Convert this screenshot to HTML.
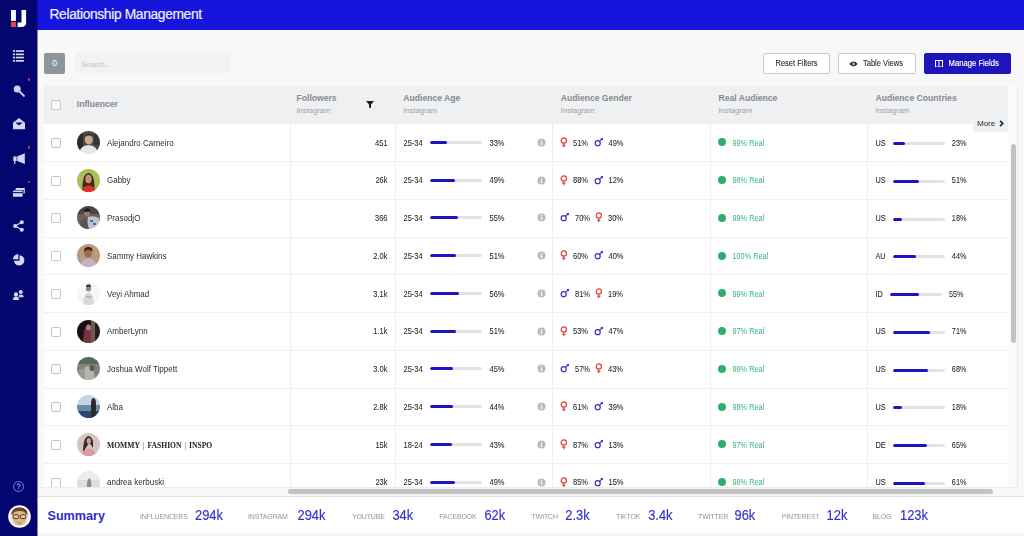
<!DOCTYPE html>
<html><head><meta charset="utf-8"><style>
*{box-sizing:border-box}
html,body{margin:0;padding:0}
body{width:1024px;height:536px;overflow:hidden;position:relative;background:#f8f8f9;font-family:"Liberation Sans",sans-serif;color:#333}
.abs{position:absolute}
#side{position:absolute;left:0;top:0;width:37px;height:536px;background:#04066f}
#head{position:absolute;left:37px;top:0;width:987px;height:29.5px;background:#1515dc;color:#eef0ff;font-size:13.8px;letter-spacing:-0.35px;line-height:29px;padding-left:12.5px;-webkit-text-stroke:0.2px #eef0ff}
.t{position:absolute;font-size:7.5px;line-height:12px;white-space:nowrap;color:#262626;-webkit-text-stroke:0.06px #262626;transform:scaleY(1.15);transform-origin:0 8.6px}
#tbl{position:absolute;left:44px;top:86px;width:964px;height:401px;background:#fff;overflow:hidden}
#thead{position:absolute;left:0;top:0;width:964px;height:38px;background:#eff0f2}
.row{position:absolute;left:44px;width:964px;height:1px;background:#f1f1f1}
.vl{position:absolute;top:86px;width:1px;height:401px;background:#efefef}
.hl{position:absolute;font-size:8.6px;font-weight:bold;color:#868a90;white-space:nowrap;line-height:12px}
.hs{position:absolute;font-size:7.6px;color:#9da0a5;white-space:nowrap;line-height:10px}
.cb{position:absolute;left:51.3px;width:10px;height:10px;border:1px solid #c4c4c4;border-radius:2px;background:#fff}
.av{position:absolute;left:77px;width:23px;height:23px;line-height:0}
.nm{left:107px;font-size:8px;color:#2e2e2e;-webkit-text-stroke:0 transparent}
.pipe{font-weight:normal;color:#555;margin:0 3px 0 3px;-webkit-text-stroke:0}
.serif{font-family:"Liberation Serif",serif;font-weight:bold;font-size:7.6px;color:#222}
.fol{right:636.5px;text-align:right}
.bar{position:absolute;height:3px;background:#e2e2e2;border-radius:2px;overflow:hidden}
.bar i{display:block;height:3px;background:#1d13c0;border-radius:2px}
.ic{position:absolute;line-height:0}
.dot{position:absolute;left:718px;width:8px;height:8px;border-radius:50%;background:#2fae6e}
.real{left:732.5px;color:#30b57a;font-size:7.3px;-webkit-text-stroke:0 transparent}
.cc{position:absolute;left:875.5px;font-size:7.3px;line-height:12px;white-space:nowrap;display:flex;align-items:center;color:#262626;-webkit-text-stroke:0.06px #262626}
.cc span:not(.bar2){display:inline-block;transform:scaleY(1.15);transform-origin:0 8.6px}
.cc .lab{min-width:0}
.bar2{display:inline-block;width:52px;height:3px;background:#e2e2e2;border-radius:2px;margin:0 7px 0 7.2px;overflow:hidden}
.bar2 i{display:block;height:3px;background:#1d13c0;border-radius:2px}
.btn{position:absolute;top:53px;height:21px;border:1px solid #c9c9c9;border-radius:2px;background:#fff;font-size:7.5px;line-height:19px;text-align:center;color:#333;white-space:nowrap}
.sl{position:absolute;top:511px;font-size:7px;line-height:12px;color:#909398;white-space:nowrap;letter-spacing:-0.15px;transform:scaleY(1.12);transform-origin:0 8.5px}
.sv{position:absolute;top:507px;font-size:12.9px;line-height:18px;color:#3531c9;white-space:nowrap;transform:scaleY(1.08);transform-origin:0 14px;-webkit-text-stroke:0.15px #3531c9}
.sico{position:absolute;line-height:0}
</style></head><body>
<div id="side"></div>
<div id="head">Relationship Management</div>

<div class="abs" style="left:44px;top:53px;width:21px;height:21px;background:#8c959d;border-radius:2px;color:#fff;font-size:8.5px;line-height:21px;text-align:center">0</div>
<div class="abs" style="left:75px;top:53px;width:155px;height:20px;background:#f1f2f3;border-radius:2px;color:#c3c6ca;font-size:7.5px;line-height:20px;padding-top:1.5px;padding-left:6px">Search...</div>

<div class="btn" style="left:763px;width:67px"></div>
<div class="t" style="left:775.5px;top:58px;font-size:7.5px">Reset Filters</div>
<div class="btn" style="left:838px;width:77.5px">&nbsp;</div>
<div class="btn" style="left:923.5px;width:87.5px;background:#1d14b9;border-color:#1d14b9;color:#fff">&nbsp;</div>

<div id="tbl"><div id="thead"></div></div>

<div class="vl" style="left:290px"></div>
<div class="vl" style="left:395px"></div>
<div class="vl" style="left:552px"></div>
<div class="vl" style="left:710px"></div>
<div class="vl" style="left:867px"></div>
<div class="cb" style="top:99.7px;background:#fbfbfb"></div>
<div class="hl" style="left:76.8px;top:97.5px">Influencer</div>
<div class="hl" style="left:296.5px;top:92px">Followers</div>
<div class="hs" style="left:296.5px;top:106px">Instagram</div>
<div class="ic" style="left:365.5px;top:100.5px"><svg width="8" height="7.5" viewBox="0 0 8 7.5"><path d="M0 0H8L5 3.6V7.5L3 6.3V3.6Z" fill="#1b1b1b"/></svg></div>
<div class="hl" style="left:403.3px;top:92px">Audience Age</div>
<div class="hs" style="left:403.3px;top:106px">Instagram</div>
<div class="hl" style="left:560.8px;top:92px">Audience Gender</div>
<div class="hs" style="left:560.8px;top:106px">Instagram</div>
<div class="hl" style="left:718.5px;top:92px">Real Audience</div>
<div class="hs" style="left:718.5px;top:106px">Instagram</div>
<div class="hl" style="left:875.5px;top:92px">Audience Countries</div>
<div class="hs" style="left:875.5px;top:106px">Instagram</div>
<div class="row" style="top:161.00px"></div>
<div class="cb" style="top:137.90px"></div>
<div class="av" style="top:130.90px"><svg width="23" height="23" viewBox="0 0 23 23"><defs><clipPath id="c0"><circle cx="11.5" cy="11.5" r="11.5"/></clipPath><filter id="f0" x="-10%" y="-10%" width="120%" height="120%"><feGaussianBlur stdDeviation="0.45"/></filter></defs><g clip-path="url(#c0)"><g filter="url(#f0)"><rect width="23" height="23" fill="#4a4848"/><rect x="0" y="0" width="6" height="23" fill="#2a2a2a"/><rect x="17" y="0" width="6" height="14" fill="#3a3632"/><ellipse cx="11.8" cy="8.5" rx="4" ry="5" fill="#c8a890"/><path d="M7.8 6Q8 2.8 11.8 2.8Q15.6 2.8 15.8 6Q14 4.5 11.8 4.6Q9.6 4.5 7.8 6Z" fill="#3a2a22"/><path d="M2 23Q3 14.5 11.5 14Q20 14.5 21 23Z" fill="#e6e6ec"/></g></g></svg></div>
<div class="t nm" style="top:137.60px">Alejandro Carneiro</div>
<div class="t fol" style="top:137.60px">451</div>
<div class="t" style="left:403.5px;top:137.60px">25-34</div>
<div class="bar" style="left:430px;top:140.90px;width:51.5px"><i style="width:17.0px"></i></div>
<div class="t" style="left:489.5px;top:137.60px">33%</div>
<div class="ic" style="left:537.2px;top:137.80px"><svg width="9" height="9" viewBox="0 0 9 9"><circle cx="4.5" cy="4.5" r="4" fill="#b8bbbf"/><rect x="3.9" y="3.8" width="1.2" height="3.2" fill="#fff"/><rect x="3.9" y="2" width="1.2" height="1.2" fill="#fff"/></svg></div>
<div class="ic" style="left:560px;top:136.90px"><svg width="8" height="11" viewBox="0 0 8 11"><circle cx="3.8" cy="3.4" r="2.6" fill="none" stroke="#e23b35" stroke-width="1.15"/><path d="M3.8 6V10.2M2.1 8.2H5.5" stroke="#e23b35" stroke-width="1.15"/></svg></div>
<div class="t" style="left:573px;top:137.60px">51%</div>
<div class="ic" style="left:593.5px;top:136.90px"><svg width="10" height="10" viewBox="0 0 10 10"><circle cx="3.7" cy="6.2" r="2.5" fill="none" stroke="#3b32c4" stroke-width="1.25"/><path d="M5.5 4.4L7.9 2" stroke="#3b32c4" stroke-width="1.1"/><path d="M6.3 0.9H9V3.6Z" fill="#3b32c4"/></svg></div>
<div class="t" style="left:608.5px;top:137.60px">49%</div>
<div class="dot" style="top:138.40px"></div>
<div class="t real" style="top:137.60px">99% Real</div>
<div class="cc" style="top:137.60px"><span class="lab">US</span><span class="bar2"><i style="width:23%"></i></span><span>23%</span></div><div class="row" style="top:198.75px"></div>
<div class="cb" style="top:175.65px"></div>
<div class="av" style="top:168.65px"><svg width="23" height="23" viewBox="0 0 23 23"><defs><clipPath id="c1"><circle cx="11.5" cy="11.5" r="11.5"/></clipPath><filter id="f1" x="-10%" y="-10%" width="120%" height="120%"><feGaussianBlur stdDeviation="0.45"/></filter></defs><g clip-path="url(#c1)"><g filter="url(#f1)"><rect width="23" height="23" fill="#a9bf58"/><path d="M5.5 21Q5 5 11.5 4Q18 5 17.5 21Z" fill="#4a2620"/><ellipse cx="11.5" cy="10" rx="3.2" ry="4.3" fill="#c99078"/><path d="M4 23Q5 17 11.5 16.5Q18 17 19 23Z" fill="#d8302c"/></g></g></svg></div>
<div class="t nm" style="top:175.35px">Gabby</div>
<div class="t fol" style="top:175.35px">26k</div>
<div class="t" style="left:403.5px;top:175.35px">25-34</div>
<div class="bar" style="left:430px;top:178.65px;width:51.5px"><i style="width:25.2px"></i></div>
<div class="t" style="left:489.5px;top:175.35px">49%</div>
<div class="ic" style="left:537.2px;top:175.55px"><svg width="9" height="9" viewBox="0 0 9 9"><circle cx="4.5" cy="4.5" r="4" fill="#b8bbbf"/><rect x="3.9" y="3.8" width="1.2" height="3.2" fill="#fff"/><rect x="3.9" y="2" width="1.2" height="1.2" fill="#fff"/></svg></div>
<div class="ic" style="left:560px;top:174.65px"><svg width="8" height="11" viewBox="0 0 8 11"><circle cx="3.8" cy="3.4" r="2.6" fill="none" stroke="#e23b35" stroke-width="1.15"/><path d="M3.8 6V10.2M2.1 8.2H5.5" stroke="#e23b35" stroke-width="1.15"/></svg></div>
<div class="t" style="left:573px;top:175.35px">88%</div>
<div class="ic" style="left:593.5px;top:174.65px"><svg width="10" height="10" viewBox="0 0 10 10"><circle cx="3.7" cy="6.2" r="2.5" fill="none" stroke="#3b32c4" stroke-width="1.25"/><path d="M5.5 4.4L7.9 2" stroke="#3b32c4" stroke-width="1.1"/><path d="M6.3 0.9H9V3.6Z" fill="#3b32c4"/></svg></div>
<div class="t" style="left:608.5px;top:175.35px">12%</div>
<div class="dot" style="top:176.15px"></div>
<div class="t real" style="top:175.35px">98% Real</div>
<div class="cc" style="top:175.35px"><span class="lab">US</span><span class="bar2"><i style="width:51%"></i></span><span>51%</span></div><div class="row" style="top:236.50px"></div>
<div class="cb" style="top:213.40px"></div>
<div class="av" style="top:206.40px"><svg width="23" height="23" viewBox="0 0 23 23"><defs><clipPath id="c2"><circle cx="11.5" cy="11.5" r="11.5"/></clipPath><filter id="f2" x="-10%" y="-10%" width="120%" height="120%"><feGaussianBlur stdDeviation="0.45"/></filter></defs><g clip-path="url(#c2)"><g filter="url(#f2)"><rect width="23" height="23" fill="#6a6058"/><rect x="0" y="0" width="23" height="8" fill="#4a4446"/><path d="M10 23L11 11Q16 9 22 12V23Z" fill="#b8c6d6"/><path d="M13 14h3v2h-3zM16 17h3v2h-3z" fill="#5a6a88"/><ellipse cx="10" cy="7" rx="3" ry="3.4" fill="#a07860"/><path d="M6.8 6Q7 2.5 10.5 2.5Q13.5 2.7 13.5 5.5Z" fill="#1e1a1a"/><path d="M2 23Q3 12 9 12L12 23Z" fill="#5a5252"/></g></g></svg></div>
<div class="t nm" style="top:213.10px">PrasodjO</div>
<div class="t fol" style="top:213.10px">366</div>
<div class="t" style="left:403.5px;top:213.10px">25-34</div>
<div class="bar" style="left:430px;top:216.40px;width:51.5px"><i style="width:28.3px"></i></div>
<div class="t" style="left:489.5px;top:213.10px">55%</div>
<div class="ic" style="left:537.2px;top:213.30px"><svg width="9" height="9" viewBox="0 0 9 9"><circle cx="4.5" cy="4.5" r="4" fill="#b8bbbf"/><rect x="3.9" y="3.8" width="1.2" height="3.2" fill="#fff"/><rect x="3.9" y="2" width="1.2" height="1.2" fill="#fff"/></svg></div>
<div class="ic" style="left:560px;top:212.40px"><svg width="10" height="10" viewBox="0 0 10 10"><circle cx="3.7" cy="6.2" r="2.5" fill="none" stroke="#3b32c4" stroke-width="1.25"/><path d="M5.5 4.4L7.9 2" stroke="#3b32c4" stroke-width="1.1"/><path d="M6.3 0.9H9V3.6Z" fill="#3b32c4"/></svg></div>
<div class="t" style="left:575px;top:213.10px">70%</div>
<div class="ic" style="left:594.5px;top:212.40px"><svg width="8" height="11" viewBox="0 0 8 11"><circle cx="3.8" cy="3.4" r="2.6" fill="none" stroke="#e23b35" stroke-width="1.15"/><path d="M3.8 6V10.2M2.1 8.2H5.5" stroke="#e23b35" stroke-width="1.15"/></svg></div>
<div class="t" style="left:608px;top:213.10px">30%</div>
<div class="dot" style="top:213.90px"></div>
<div class="t real" style="top:213.10px">99% Real</div>
<div class="cc" style="top:213.10px"><span class="lab">US</span><span class="bar2"><i style="width:18%"></i></span><span>18%</span></div><div class="row" style="top:274.25px"></div>
<div class="cb" style="top:251.15px"></div>
<div class="av" style="top:244.15px"><svg width="23" height="23" viewBox="0 0 23 23"><defs><clipPath id="c3"><circle cx="11.5" cy="11.5" r="11.5"/></clipPath><filter id="f3" x="-10%" y="-10%" width="120%" height="120%"><feGaussianBlur stdDeviation="0.45"/></filter></defs><g clip-path="url(#c3)"><g filter="url(#f3)"><rect width="23" height="23" fill="#b89a80"/><ellipse cx="11" cy="9" rx="3.8" ry="4.6" fill="#9a6a4c"/><path d="M7 8Q6.5 3 11.5 3Q16 3 15.5 8Q13.5 5.5 11 5.8Q9 5.8 7 8Z" fill="#3a2418"/><path d="M3 23Q4 14.5 11.5 14.5Q19 14.5 20 23Z" fill="#c8b0c4"/></g></g></svg></div>
<div class="t nm" style="top:250.85px">Sammy Hawkins</div>
<div class="t fol" style="top:250.85px">2.0k</div>
<div class="t" style="left:403.5px;top:250.85px">25-34</div>
<div class="bar" style="left:430px;top:254.15px;width:51.5px"><i style="width:26.3px"></i></div>
<div class="t" style="left:489.5px;top:250.85px">51%</div>
<div class="ic" style="left:537.2px;top:251.05px"><svg width="9" height="9" viewBox="0 0 9 9"><circle cx="4.5" cy="4.5" r="4" fill="#b8bbbf"/><rect x="3.9" y="3.8" width="1.2" height="3.2" fill="#fff"/><rect x="3.9" y="2" width="1.2" height="1.2" fill="#fff"/></svg></div>
<div class="ic" style="left:560px;top:250.15px"><svg width="8" height="11" viewBox="0 0 8 11"><circle cx="3.8" cy="3.4" r="2.6" fill="none" stroke="#e23b35" stroke-width="1.15"/><path d="M3.8 6V10.2M2.1 8.2H5.5" stroke="#e23b35" stroke-width="1.15"/></svg></div>
<div class="t" style="left:573px;top:250.85px">60%</div>
<div class="ic" style="left:593.5px;top:250.15px"><svg width="10" height="10" viewBox="0 0 10 10"><circle cx="3.7" cy="6.2" r="2.5" fill="none" stroke="#3b32c4" stroke-width="1.25"/><path d="M5.5 4.4L7.9 2" stroke="#3b32c4" stroke-width="1.1"/><path d="M6.3 0.9H9V3.6Z" fill="#3b32c4"/></svg></div>
<div class="t" style="left:608.5px;top:250.85px">40%</div>
<div class="dot" style="top:251.65px"></div>
<div class="t real" style="top:250.85px">100% Real</div>
<div class="cc" style="top:250.85px"><span class="lab">AU</span><span class="bar2"><i style="width:44%"></i></span><span>44%</span></div><div class="row" style="top:312.00px"></div>
<div class="cb" style="top:288.90px"></div>
<div class="av" style="top:281.90px"><svg width="23" height="23" viewBox="0 0 23 23"><defs><clipPath id="c4"><circle cx="11.5" cy="11.5" r="11.5"/></clipPath><filter id="f4" x="-10%" y="-10%" width="120%" height="120%"><feGaussianBlur stdDeviation="0.45"/></filter></defs><g clip-path="url(#c4)"><g filter="url(#f4)"><rect width="23" height="23" fill="#f6f6f6"/><ellipse cx="11.5" cy="6.5" rx="2.6" ry="3" fill="#8a8a8a"/><path d="M9 5Q9 2.3 11.5 2.3Q14 2.3 14 5Z" fill="#3a3a3a"/><path d="M6 23Q6.5 11 11.5 10.5Q16.5 11 17 23Z" fill="#d8d8d8"/><path d="M9 14Q12 17 15 14" stroke="#9a9a9a" stroke-width="1" fill="none"/></g></g></svg></div>
<div class="t nm" style="top:288.60px">Veyi Ahmad</div>
<div class="t fol" style="top:288.60px">3.1k</div>
<div class="t" style="left:403.5px;top:288.60px">25-34</div>
<div class="bar" style="left:430px;top:291.90px;width:51.5px"><i style="width:28.8px"></i></div>
<div class="t" style="left:489.5px;top:288.60px">56%</div>
<div class="ic" style="left:537.2px;top:288.80px"><svg width="9" height="9" viewBox="0 0 9 9"><circle cx="4.5" cy="4.5" r="4" fill="#b8bbbf"/><rect x="3.9" y="3.8" width="1.2" height="3.2" fill="#fff"/><rect x="3.9" y="2" width="1.2" height="1.2" fill="#fff"/></svg></div>
<div class="ic" style="left:560px;top:287.90px"><svg width="10" height="10" viewBox="0 0 10 10"><circle cx="3.7" cy="6.2" r="2.5" fill="none" stroke="#3b32c4" stroke-width="1.25"/><path d="M5.5 4.4L7.9 2" stroke="#3b32c4" stroke-width="1.1"/><path d="M6.3 0.9H9V3.6Z" fill="#3b32c4"/></svg></div>
<div class="t" style="left:575px;top:288.60px">81%</div>
<div class="ic" style="left:594.5px;top:287.90px"><svg width="8" height="11" viewBox="0 0 8 11"><circle cx="3.8" cy="3.4" r="2.6" fill="none" stroke="#e23b35" stroke-width="1.15"/><path d="M3.8 6V10.2M2.1 8.2H5.5" stroke="#e23b35" stroke-width="1.15"/></svg></div>
<div class="t" style="left:608px;top:288.60px">19%</div>
<div class="dot" style="top:289.40px"></div>
<div class="t real" style="top:288.60px">99% Real</div>
<div class="cc" style="top:288.60px"><span class="lab">ID</span><span class="bar2"><i style="width:55%"></i></span><span>55%</span></div><div class="row" style="top:349.75px"></div>
<div class="cb" style="top:326.65px"></div>
<div class="av" style="top:319.65px"><svg width="23" height="23" viewBox="0 0 23 23"><defs><clipPath id="c5"><circle cx="11.5" cy="11.5" r="11.5"/></clipPath><filter id="f5" x="-10%" y="-10%" width="120%" height="120%"><feGaussianBlur stdDeviation="0.45"/></filter></defs><g clip-path="url(#c5)"><g filter="url(#f5)"><rect width="23" height="23" fill="#1a1014"/><rect x="14" y="0" width="9" height="23" fill="#2a1a1a"/><path d="M6 23Q6 8 11 4Q15 5 15.5 23Z" fill="#7a3040"/><ellipse cx="11.5" cy="7.5" rx="2.4" ry="3" fill="#b88070"/><path d="M14 0H18V23H14Z" fill="#6a5a50"/></g></g></svg></div>
<div class="t nm" style="top:326.35px">AmberLynn</div>
<div class="t fol" style="top:326.35px">1.1k</div>
<div class="t" style="left:403.5px;top:326.35px">25-34</div>
<div class="bar" style="left:430px;top:329.65px;width:51.5px"><i style="width:26.3px"></i></div>
<div class="t" style="left:489.5px;top:326.35px">51%</div>
<div class="ic" style="left:537.2px;top:326.55px"><svg width="9" height="9" viewBox="0 0 9 9"><circle cx="4.5" cy="4.5" r="4" fill="#b8bbbf"/><rect x="3.9" y="3.8" width="1.2" height="3.2" fill="#fff"/><rect x="3.9" y="2" width="1.2" height="1.2" fill="#fff"/></svg></div>
<div class="ic" style="left:560px;top:325.65px"><svg width="8" height="11" viewBox="0 0 8 11"><circle cx="3.8" cy="3.4" r="2.6" fill="none" stroke="#e23b35" stroke-width="1.15"/><path d="M3.8 6V10.2M2.1 8.2H5.5" stroke="#e23b35" stroke-width="1.15"/></svg></div>
<div class="t" style="left:573px;top:326.35px">53%</div>
<div class="ic" style="left:593.5px;top:325.65px"><svg width="10" height="10" viewBox="0 0 10 10"><circle cx="3.7" cy="6.2" r="2.5" fill="none" stroke="#3b32c4" stroke-width="1.25"/><path d="M5.5 4.4L7.9 2" stroke="#3b32c4" stroke-width="1.1"/><path d="M6.3 0.9H9V3.6Z" fill="#3b32c4"/></svg></div>
<div class="t" style="left:608.5px;top:326.35px">47%</div>
<div class="dot" style="top:327.15px"></div>
<div class="t real" style="top:326.35px">97% Real</div>
<div class="cc" style="top:326.35px"><span class="lab">US</span><span class="bar2"><i style="width:71%"></i></span><span>71%</span></div><div class="row" style="top:387.50px"></div>
<div class="cb" style="top:364.40px"></div>
<div class="av" style="top:357.40px"><svg width="23" height="23" viewBox="0 0 23 23"><defs><clipPath id="c6"><circle cx="11.5" cy="11.5" r="11.5"/></clipPath><filter id="f6" x="-10%" y="-10%" width="120%" height="120%"><feGaussianBlur stdDeviation="0.45"/></filter></defs><g clip-path="url(#c6)"><g filter="url(#f6)"><rect width="23" height="23" fill="#7e8678"/><rect x="0" y="0" width="23" height="7" fill="#5a6a5a"/><path d="M4 23Q5 9 11 9Q17 9 18 23Z" fill="#b4b4b0"/><ellipse cx="15" cy="11" rx="2.5" ry="3" fill="#605850"/><path d="M2 12H8V23H2Z" fill="#9a9a96"/></g></g></svg></div>
<div class="t nm" style="top:364.10px">Joshua Wolf Tippett</div>
<div class="t fol" style="top:364.10px">3.0k</div>
<div class="t" style="left:403.5px;top:364.10px">25-34</div>
<div class="bar" style="left:430px;top:367.40px;width:51.5px"><i style="width:23.2px"></i></div>
<div class="t" style="left:489.5px;top:364.10px">45%</div>
<div class="ic" style="left:537.2px;top:364.30px"><svg width="9" height="9" viewBox="0 0 9 9"><circle cx="4.5" cy="4.5" r="4" fill="#b8bbbf"/><rect x="3.9" y="3.8" width="1.2" height="3.2" fill="#fff"/><rect x="3.9" y="2" width="1.2" height="1.2" fill="#fff"/></svg></div>
<div class="ic" style="left:560px;top:363.40px"><svg width="10" height="10" viewBox="0 0 10 10"><circle cx="3.7" cy="6.2" r="2.5" fill="none" stroke="#3b32c4" stroke-width="1.25"/><path d="M5.5 4.4L7.9 2" stroke="#3b32c4" stroke-width="1.1"/><path d="M6.3 0.9H9V3.6Z" fill="#3b32c4"/></svg></div>
<div class="t" style="left:575px;top:364.10px">57%</div>
<div class="ic" style="left:594.5px;top:363.40px"><svg width="8" height="11" viewBox="0 0 8 11"><circle cx="3.8" cy="3.4" r="2.6" fill="none" stroke="#e23b35" stroke-width="1.15"/><path d="M3.8 6V10.2M2.1 8.2H5.5" stroke="#e23b35" stroke-width="1.15"/></svg></div>
<div class="t" style="left:608px;top:364.10px">43%</div>
<div class="dot" style="top:364.90px"></div>
<div class="t real" style="top:364.10px">99% Real</div>
<div class="cc" style="top:364.10px"><span class="lab">US</span><span class="bar2"><i style="width:68%"></i></span><span>68%</span></div><div class="row" style="top:425.25px"></div>
<div class="cb" style="top:402.15px"></div>
<div class="av" style="top:395.15px"><svg width="23" height="23" viewBox="0 0 23 23"><defs><clipPath id="c7"><circle cx="11.5" cy="11.5" r="11.5"/></clipPath><filter id="f7" x="-10%" y="-10%" width="120%" height="120%"><feGaussianBlur stdDeviation="0.45"/></filter></defs><g clip-path="url(#c7)"><g filter="url(#f7)"><rect width="23" height="23" fill="#c8d2e0"/><rect x="0" y="10" width="23" height="6" fill="#6a8aaa"/><rect x="0" y="16" width="23" height="7" fill="#2a4a6e"/><path d="M14 23V9Q14 3 16.5 3Q19 3 19 9V23Z" fill="#2a2a36"/></g></g></svg></div>
<div class="t nm" style="top:401.85px">Alba</div>
<div class="t fol" style="top:401.85px">2.8k</div>
<div class="t" style="left:403.5px;top:401.85px">25-34</div>
<div class="bar" style="left:430px;top:405.15px;width:51.5px"><i style="width:22.7px"></i></div>
<div class="t" style="left:489.5px;top:401.85px">44%</div>
<div class="ic" style="left:537.2px;top:402.05px"><svg width="9" height="9" viewBox="0 0 9 9"><circle cx="4.5" cy="4.5" r="4" fill="#b8bbbf"/><rect x="3.9" y="3.8" width="1.2" height="3.2" fill="#fff"/><rect x="3.9" y="2" width="1.2" height="1.2" fill="#fff"/></svg></div>
<div class="ic" style="left:560px;top:401.15px"><svg width="8" height="11" viewBox="0 0 8 11"><circle cx="3.8" cy="3.4" r="2.6" fill="none" stroke="#e23b35" stroke-width="1.15"/><path d="M3.8 6V10.2M2.1 8.2H5.5" stroke="#e23b35" stroke-width="1.15"/></svg></div>
<div class="t" style="left:573px;top:401.85px">61%</div>
<div class="ic" style="left:593.5px;top:401.15px"><svg width="10" height="10" viewBox="0 0 10 10"><circle cx="3.7" cy="6.2" r="2.5" fill="none" stroke="#3b32c4" stroke-width="1.25"/><path d="M5.5 4.4L7.9 2" stroke="#3b32c4" stroke-width="1.1"/><path d="M6.3 0.9H9V3.6Z" fill="#3b32c4"/></svg></div>
<div class="t" style="left:608.5px;top:401.85px">39%</div>
<div class="dot" style="top:402.65px"></div>
<div class="t real" style="top:401.85px">98% Real</div>
<div class="cc" style="top:401.85px"><span class="lab">US</span><span class="bar2"><i style="width:18%"></i></span><span>18%</span></div><div class="row" style="top:463.00px"></div>
<div class="cb" style="top:439.90px"></div>
<div class="av" style="top:432.90px"><svg width="23" height="23" viewBox="0 0 23 23"><defs><clipPath id="c8"><circle cx="11.5" cy="11.5" r="11.5"/></clipPath><filter id="f8" x="-10%" y="-10%" width="120%" height="120%"><feGaussianBlur stdDeviation="0.45"/></filter></defs><g clip-path="url(#c8)"><g filter="url(#f8)"><rect width="23" height="23" fill="#d6c4be"/><path d="M6 20Q6 4 11.5 3Q17 4 16 15Q14 11 12 10Q9 14 6 20Z" fill="#3a2a26"/><ellipse cx="11.8" cy="8" rx="2.2" ry="3" fill="#c8a090"/><path d="M4 23Q6 16 12 15.5Q18 16 19 23Z" fill="#d89aa8"/></g></g></svg></div>
<div class="t nm serif" style="top:439.80px">MOMMY<span class="pipe">|</span>FASHION<span class="pipe">|</span>INSPO</div>
<div class="t fol" style="top:439.60px">15k</div>
<div class="t" style="left:403.5px;top:439.60px">18-24</div>
<div class="bar" style="left:430px;top:442.90px;width:51.5px"><i style="width:22.1px"></i></div>
<div class="t" style="left:489.5px;top:439.60px">43%</div>
<div class="ic" style="left:537.2px;top:439.80px"><svg width="9" height="9" viewBox="0 0 9 9"><circle cx="4.5" cy="4.5" r="4" fill="#b8bbbf"/><rect x="3.9" y="3.8" width="1.2" height="3.2" fill="#fff"/><rect x="3.9" y="2" width="1.2" height="1.2" fill="#fff"/></svg></div>
<div class="ic" style="left:560px;top:438.90px"><svg width="8" height="11" viewBox="0 0 8 11"><circle cx="3.8" cy="3.4" r="2.6" fill="none" stroke="#e23b35" stroke-width="1.15"/><path d="M3.8 6V10.2M2.1 8.2H5.5" stroke="#e23b35" stroke-width="1.15"/></svg></div>
<div class="t" style="left:573px;top:439.60px">87%</div>
<div class="ic" style="left:593.5px;top:438.90px"><svg width="10" height="10" viewBox="0 0 10 10"><circle cx="3.7" cy="6.2" r="2.5" fill="none" stroke="#3b32c4" stroke-width="1.25"/><path d="M5.5 4.4L7.9 2" stroke="#3b32c4" stroke-width="1.1"/><path d="M6.3 0.9H9V3.6Z" fill="#3b32c4"/></svg></div>
<div class="t" style="left:608.5px;top:439.60px">13%</div>
<div class="dot" style="top:440.40px"></div>
<div class="t real" style="top:439.60px">97% Real</div>
<div class="cc" style="top:439.60px"><span class="lab">DE</span><span class="bar2"><i style="width:65%"></i></span><span>65%</span></div><div class="row" style="top:500.75px"></div>
<div class="cb" style="top:477.65px"></div>
<div class="av" style="top:470.65px"><svg width="23" height="23" viewBox="0 0 23 23"><defs><clipPath id="c9"><circle cx="11.5" cy="11.5" r="11.5"/></clipPath><filter id="f9" x="-10%" y="-10%" width="120%" height="120%"><feGaussianBlur stdDeviation="0.45"/></filter></defs><g clip-path="url(#c9)"><g filter="url(#f9)"><rect width="23" height="23" fill="#dedede"/><rect x="0" y="0" width="23" height="9" fill="#ececec"/><path d="M10 20Q9 9 12.5 7Q15 9 14 20Z" fill="#8e8e8e"/></g></g></svg></div>
<div class="t nm" style="top:477.35px">andrea kerbuski</div>
<div class="t fol" style="top:477.35px">23k</div>
<div class="t" style="left:403.5px;top:477.35px">25-34</div>
<div class="bar" style="left:430px;top:480.65px;width:51.5px"><i style="width:25.2px"></i></div>
<div class="t" style="left:489.5px;top:477.35px">49%</div>
<div class="ic" style="left:537.2px;top:477.55px"><svg width="9" height="9" viewBox="0 0 9 9"><circle cx="4.5" cy="4.5" r="4" fill="#b8bbbf"/><rect x="3.9" y="3.8" width="1.2" height="3.2" fill="#fff"/><rect x="3.9" y="2" width="1.2" height="1.2" fill="#fff"/></svg></div>
<div class="ic" style="left:560px;top:476.65px"><svg width="8" height="11" viewBox="0 0 8 11"><circle cx="3.8" cy="3.4" r="2.6" fill="none" stroke="#e23b35" stroke-width="1.15"/><path d="M3.8 6V10.2M2.1 8.2H5.5" stroke="#e23b35" stroke-width="1.15"/></svg></div>
<div class="t" style="left:573px;top:477.35px">85%</div>
<div class="ic" style="left:593.5px;top:476.65px"><svg width="10" height="10" viewBox="0 0 10 10"><circle cx="3.7" cy="6.2" r="2.5" fill="none" stroke="#3b32c4" stroke-width="1.25"/><path d="M5.5 4.4L7.9 2" stroke="#3b32c4" stroke-width="1.1"/><path d="M6.3 0.9H9V3.6Z" fill="#3b32c4"/></svg></div>
<div class="t" style="left:608.5px;top:477.35px">15%</div>
<div class="dot" style="top:478.15px"></div>
<div class="t real" style="top:477.35px">98% Real</div>
<div class="cc" style="top:477.35px"><span class="lab">US</span><span class="bar2"><i style="width:61%"></i></span><span>61%</span></div>
<div class="abs" style="left:973px;top:118.5px;width:35px;height:13px;background:#eef0f2;border-radius:3px 0 0 0"></div>
<div class="t" style="left:977px;top:117.5px;font-size:8px;line-height:12px;color:#333;-webkit-text-stroke:0 transparent;transform:none">More</div>
<div class="ic" style="left:998.5px;top:120px"><svg width="5" height="7" viewBox="0 0 5 7"><path d="M1 0.8L3.8 3.5L1 6.2" stroke="#222" stroke-width="1.6" fill="none"/></svg></div>

<div class="abs" style="left:1008px;top:86px;width:9.5px;height:401px;background:#fbfbfb;border-right:1px solid #e9e9e9"></div>
<div class="abs" style="left:1010.5px;top:144px;width:5.5px;height:199px;background:#c2c2c2;border-radius:3px"></div>
<div class="abs" style="left:37px;top:487px;width:980.5px;height:9.5px;background:#f7f7f7;border-top:1px solid #ececec"></div>
<div class="abs" style="left:287.7px;top:489px;width:705.5px;height:5px;background:#c2c2c2;border-radius:3px"></div>

<div class="abs" style="left:37px;top:496px;width:987px;height:1px;background:#e3e3e3"></div>
<div class="abs" style="left:37px;top:497px;width:987px;height:36px;background:#fff"></div>
<div class="abs" style="left:37px;top:533px;width:987px;height:3px;background:#f4f4f4"></div>
<div class="abs" style="left:47.5px;top:506.8px;font-size:12.6px;line-height:18px;font-weight:bold;color:#2f2bcb">Summary</div>
<div class="sl" style="left:140px">INFLUENCERS</div><div class="sv" style="left:195px">294k</div>
<div class="sl" style="left:248px">INSTAGRAM</div><div class="sv" style="left:297.5px">294k</div>
<div class="sl" style="left:352px">YOUTUBE</div><div class="sv" style="left:392.4px">34k</div>
<div class="sl" style="left:439.3px">FACEBOOK</div><div class="sv" style="left:484.4px">62k</div>
<div class="sl" style="left:531.6px">TWITCH</div><div class="sv" style="left:565.3px">2.3k</div>
<div class="sl" style="left:616px">TIKTOK</div><div class="sv" style="left:648.2px">3.4k</div>
<div class="sl" style="left:698px">TWITTER</div><div class="sv" style="left:734.5px">96k</div>
<div class="sl" style="left:781.7px">PINTEREST</div><div class="sv" style="left:826.6px">12k</div>
<div class="sl" style="left:872.4px">BLOG</div><div class="sv" style="left:900px">123k</div>

<!-- sidebar logo & icons -->
<div class="sico" style="left:10.8px;top:9.9px"><svg width="16" height="17.2" viewBox="0 0 16 17.2"><rect x="0" y="0" width="4.9" height="10.9" fill="#fff"/><rect x="0" y="12.1" width="4.9" height="4.9" fill="#ec4a3a"/><path d="M10.5 0H15.1V12.5Q15.1 17 10.6 17H6.6V12.4H10.5Z" fill="#fff"/></svg></div>
<div class="sico" style="left:13px;top:50px"><svg width="11" height="12" viewBox="0 0 11 12"><g fill="#d6d6f6"><rect x="0" y="0.2" width="2" height="1.7"/><rect x="2.9" y="0.2" width="8" height="1.7"/><rect x="0" y="3.5" width="2" height="1.7"/><rect x="2.9" y="3.5" width="8" height="1.7"/><rect x="0" y="6.7" width="2" height="1.7"/><rect x="2.9" y="6.7" width="8" height="1.7"/><rect x="0" y="10" width="2" height="1.7"/><rect x="2.9" y="10" width="8" height="1.7"/></g></svg></div>
<div class="sico" style="left:12.5px;top:84.5px"><svg width="12" height="12" viewBox="0 0 12 12"><circle cx="4.2" cy="4.1" r="3.5" fill="#d6d6f6"/><circle cx="4.2" cy="4.1" r="2.3" fill="none" stroke="#b8b8e6" stroke-width="0.6"/><path d="M6.6 6.6L10.9 10.9" stroke="#d6d6f6" stroke-width="2" stroke-linecap="round"/></svg></div>
<div class="abs" style="left:27.5px;top:78px;width:2.2px;height:2.6px;background:#d8354a;border-radius:1px"></div>
<div class="sico" style="left:12.7px;top:118.3px"><svg width="12" height="11.5" viewBox="0 0 12 11.5"><path d="M0 4.8L6 0L12 4.8V11.3H0Z" fill="#d6d6f6"/><path d="M2.3 4.6H9.7L6 7.6Z" fill="#04066f"/></svg></div>
<div class="sico" style="left:12.7px;top:152.5px"><svg width="12" height="11.5" viewBox="0 0 12 11.5"><path d="M0.3 3.6H3.6V8H2.4V11.3H1.2V8H0.3Z" fill="#d6d6f6"/><path d="M4.2 3.4L11.8 0.3V11L4.2 8.1Z" fill="#d6d6f6"/></svg></div>
<div class="abs" style="left:28px;top:146px;width:2.2px;height:2.6px;background:#d8354a;border-radius:1px"></div>
<div class="sico" style="left:12.7px;top:187.6px"><svg width="12" height="9" viewBox="0 0 12 9"><rect x="2.6" y="0" width="9.2" height="5.6" rx="0.8" fill="#d6d6f6"/><rect x="1.5" y="2" width="9" height="6.8" fill="#04066f"/><rect x="0" y="2.6" width="9.6" height="6.2" rx="0.8" fill="#d6d6f6"/><rect x="0" y="4.1" width="9.6" height="1.1" fill="#04066f"/></svg></div>
<div class="abs" style="left:28px;top:180.5px;width:2.2px;height:2.6px;background:#d8354a;border-radius:1px"></div>
<div class="sico" style="left:13px;top:220px"><svg width="11" height="12" viewBox="0 0 11 12"><path d="M8.8 2.2L2.2 6L8.8 9.8" stroke="#d6d6f6" stroke-width="1.2" fill="none"/><circle cx="8.8" cy="2.2" r="2" fill="#d6d6f6"/><circle cx="2.1" cy="6" r="2" fill="#d6d6f6"/><circle cx="8.8" cy="9.8" r="2" fill="#d6d6f6"/></svg></div>
<div class="sico" style="left:12.7px;top:253.8px"><svg width="12" height="12.2" viewBox="0 0 12 12.2"><path d="M6.5 1.2A5.2 5.2 0 1 1 1 6.7H6.5Z" fill="#d6d6f6"/><path d="M5.3 0A5.3 5.3 0 0 0 0 5.3H5.3Z" fill="#d6d6f6"/></svg></div>
<div class="sico" style="left:12.7px;top:289.8px"><svg width="11" height="10" viewBox="0 0 11 10"><circle cx="3" cy="4.4" r="2.1" fill="#d6d6f6"/><path d="M0 10Q0 6.6 3 6.6Q6 6.6 6 10Z" fill="#d6d6f6"/><circle cx="7.8" cy="2.1" r="2" fill="#d6d6f6"/><path d="M5.6 7.2Q5.6 4.4 7.8 4.4Q10.6 4.4 10.6 7.2Z" fill="#d6d6f6"/></svg></div>
<div class="sico" style="left:12.8px;top:481px"><svg width="11.2" height="11" viewBox="0 0 11.2 11"><circle cx="5.6" cy="5.5" r="5" stroke="#8e8ee0" stroke-width="0.9" fill="none"/><path d="M4.2 4.4Q4.2 2.9 5.6 2.9Q7 2.9 7 4.2Q7 5.1 5.7 5.6V6.5" stroke="#b4b4ee" stroke-width="1" fill="none"/><circle cx="5.7" cy="7.8" r="0.6" fill="#b4b4ee"/></svg></div>
<div class="sico" style="left:7.5px;top:505px"><svg width="23" height="23" viewBox="0 0 23 23"><defs><clipPath id="avc"><circle cx="11.5" cy="11.5" r="9.6"/></clipPath></defs><circle cx="11.5" cy="11.5" r="11.3" fill="#fff"/><g clip-path="url(#avc)"><rect width="23" height="23" fill="#f0e8e0"/><ellipse cx="11.5" cy="12.5" rx="7" ry="8.5" fill="#dcb890"/><path d="M3.5 10Q3 2.5 11.5 2.2Q20 2.5 19.5 10L17.8 9Q17 5.8 11.5 6Q6 5.8 5.2 9Z" fill="#6a4628"/><rect x="5.2" y="9.8" width="5.4" height="3.8" rx="1" fill="#e8c8a0" stroke="#4a3020" stroke-width="1"/><rect x="12.4" y="9.8" width="5.4" height="3.8" rx="1" fill="#e8c8a0" stroke="#4a3020" stroke-width="1"/><path d="M9.5 17.6Q11.5 18.6 13.5 17.6" stroke="#a07060" stroke-width="0.8" fill="none"/></g></svg></div>

<!-- button contents -->
<div class="ic" style="left:849px;top:61px"><svg width="9" height="6" viewBox="0 0 9 6"><path d="M0.3 3Q4.5 -1.8 8.7 3Q4.5 7.8 0.3 3Z" fill="#222"/><circle cx="4.5" cy="3" r="1.4" fill="#fff"/><circle cx="4.5" cy="3" r="0.8" fill="#222"/></svg></div>
<div class="t" style="left:863px;top:58px;font-size:7.5px">Table Views</div>
<div class="ic" style="left:935px;top:59.5px"><svg width="8" height="7.5" viewBox="0 0 8 7.5"><rect x="0.5" y="0.5" width="7" height="6.5" stroke="#fff" stroke-width="1" fill="none"/><path d="M4 0.5V7" stroke="#fff" stroke-width="1"/></svg></div>
<div class="t" style="left:948.5px;top:58px;font-size:7.7px;color:#fff;-webkit-text-stroke:0.15px #fff">Manage Fields</div>


<div class="abs" style="left:37px;top:0;width:1px;height:29px;background:#0c0ea5"></div>
<div class="abs" style="left:37px;top:30px;width:1px;height:506px;background:#8082b4"></div>
</body></html>
